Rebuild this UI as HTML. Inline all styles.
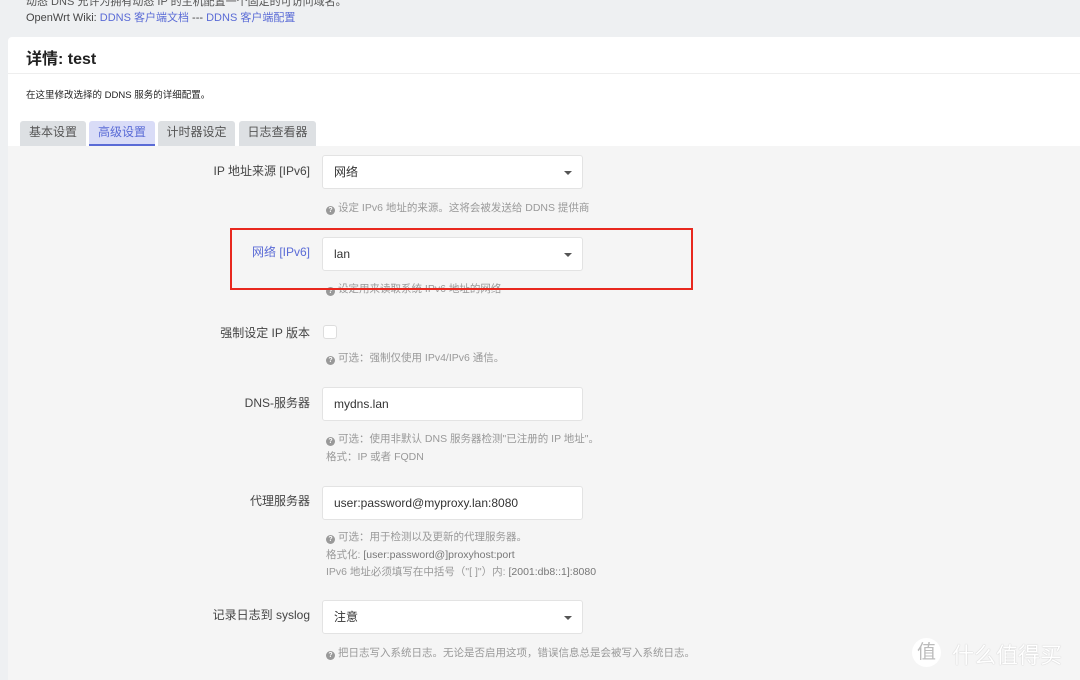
<!DOCTYPE html><html><head><meta charset="utf-8"><style>
body{margin:0;width:1080px;height:680px;overflow:hidden;background:#eef0f2;font-family:"Liberation Sans","Noto Sans CJK SC",sans-serif;position:relative;color:#333}
.a{position:absolute;white-space:nowrap}
.card{position:absolute;left:8px;top:37px;width:1072px;height:643px;background:#fff;border-radius:4px 0 0 0}
.body{position:absolute;left:8px;top:146px;width:1072px;height:534px;background:#f5f5f5}
.lbl{position:absolute;right:770px;font-size:12px;color:#444;white-space:nowrap}
.inp{position:absolute;left:322px;width:261px;height:34px;background:#fff;border:1px solid #e3e3e3;border-radius:3px;font-size:12px;color:#333;box-sizing:border-box;padding:0 11px;line-height:32px}
.inp.s::after{content:"";position:absolute;right:10px;top:15px;border:4px solid transparent;border-top:4px solid #555;border-bottom:0}
.h{position:absolute;left:326px;font-size:10.5px;color:#999;white-space:nowrap;line-height:17.5px}
.q{display:inline-block;width:9px;height:9px;border-radius:50%;background:#999;color:#fff;font-size:7px;text-align:center;line-height:9px;font-weight:bold;vertical-align:-1px;margin-right:3px}
.tab{position:absolute;top:121px;height:25px;background:#dde0e3;font-size:12px;color:#555;text-align:center;line-height:22px;border-radius:3px 3px 0 0}
a{color:#5a6bd6;text-decoration:none}
</style></head><body>
<div class="a" style="left:26px;top:-7px;font-size:11px;color:#555">动态 DNS 允许为拥有动态 IP 的主机配置一个固定的可访问域名。</div>
<div class="a" style="left:26px;top:9px;font-size:11px;color:#444">OpenWrt Wiki: <a>DDNS 客户端文档</a> --- <a>DDNS 客户端配置</a></div>
<div class="card"></div>
<div class="a" style="left:26px;top:45px;font-size:16px;font-weight:bold;color:#222">详情: test</div>
<div class="a" style="left:8px;top:73px;width:1072px;height:1px;background:#eee"></div>
<div class="a" style="left:26px;top:87px;font-size:9.5px;color:#222">在这里修改选择的 DDNS 服务的详细配置。</div>
<div class="body"></div>
<div class="tab" style="left:20px;width:66px">基本设置</div>
<div class="tab" style="left:89px;width:66px;background:#d9dcf7;color:#5a6bd6;border-bottom:2px solid #5a6bd6;height:23px">高级设置</div>
<div class="tab" style="left:158px;width:77px">计时器设定</div>
<div class="tab" style="left:239px;width:77px">日志查看器</div>

<div class="lbl" style="top:162px">IP 地址来源 [IPv6]</div>
<div class="inp s" style="top:155px">网络</div>
<div class="h" style="top:200px"><span class="q">?</span>设定 IPv6 地址的来源。这将会被发送给 DDNS 提供商</div>

<div class="lbl" style="top:243px;color:#5a6bd6">网络 [IPv6]</div>
<div class="inp s" style="top:237px">lan</div>
<div class="h" style="top:281px"><span class="q">?</span>设定用来读取系统 IPv6 地址的网络</div>
<div class="a" style="left:230px;top:228px;width:459px;height:58px;border:2px solid #e8281e"></div>

<div class="lbl" style="top:324px">强制设定 IP 版本</div>
<div class="a" style="left:323px;top:325px;width:12px;height:12px;border:1px solid #ddd;border-radius:3px;background:#fff"></div>
<div class="h" style="top:350px"><span class="q">?</span>可选：强制仅使用 IPv4/IPv6 通信。</div>

<div class="lbl" style="top:394px">DNS-服务器</div>
<div class="inp" style="top:387px">mydns.lan</div>
<div class="h" style="top:431px"><span class="q">?</span>可选：使用非默认 DNS 服务器检测"已注册的 IP 地址"。<br>格式：IP 或者 FQDN</div>

<div class="lbl" style="top:492px">代理服务器</div>
<div class="inp" style="top:486px">user:password@myproxy.lan:8080</div>
<div class="h" style="top:529px"><span class="q">?</span>可选：用于检测以及更新的代理服务器。<br>格式化: <span style="color:#777">[user:password@]proxyhost:port</span><br>IPv6 地址必须填写在中括号（"[ ]"）内: <span style="color:#777">[2001:db8::1]:8080</span></div>

<div class="lbl" style="top:606px">记录日志到 syslog</div>
<div class="inp s" style="top:600px">注意</div>
<div class="h" style="top:645px"><span class="q">?</span>把日志写入系统日志。无论是否启用这项，错误信息总是会被写入系统日志。</div>

<div class="a" style="left:912px;top:638px;width:29px;height:29px;border-radius:50%;background:#fff;color:#bbb;font-size:19px;text-align:center;line-height:29px">值</div>
<div class="a" style="left:952px;top:638px;font-size:22px;color:#fff;text-shadow:0 0 1px #aaa">什么值得买</div>
</body></html>
